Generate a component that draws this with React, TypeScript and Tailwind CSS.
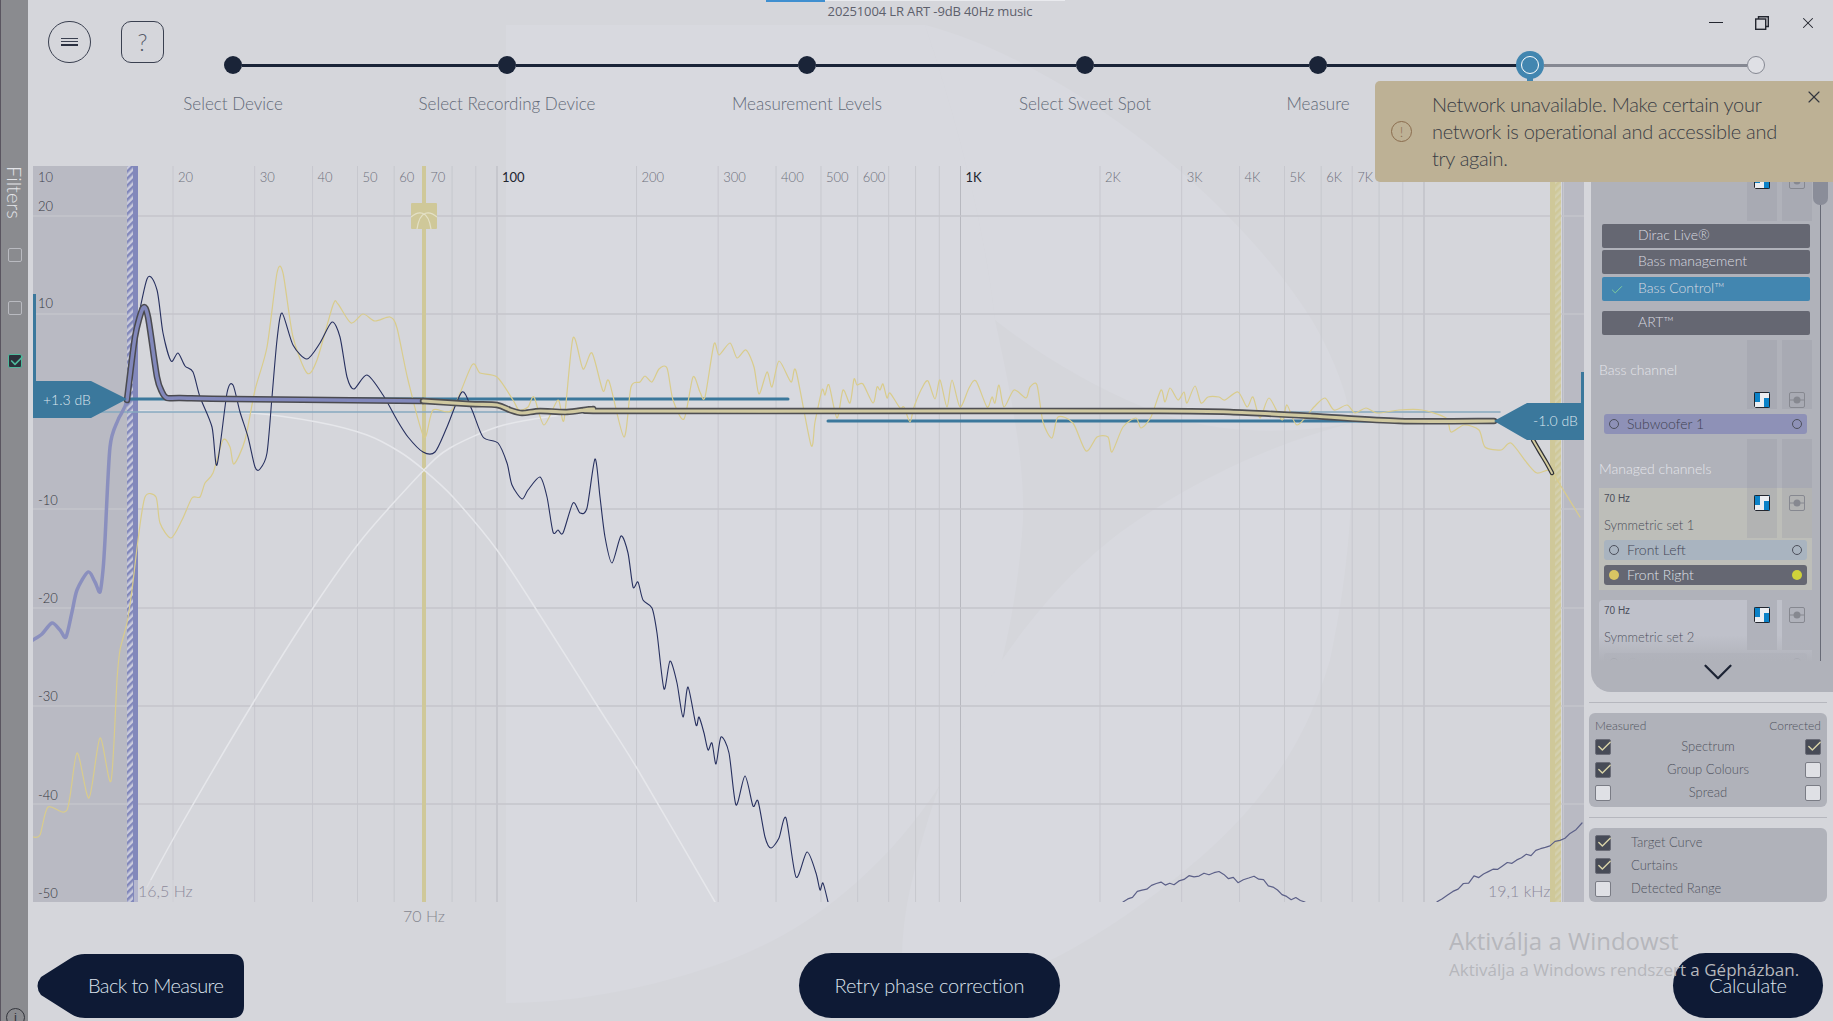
import React from 'react';
import { Check, ChevronDown, X } from 'lucide-react';

type Pt = [number, number];

// frequency -> x position on the chart (page coordinates)
const fx = (f: number) => 497 + 463.5 * Math.log10(f / 100);

const smooth = (p: Pt[]) => {
  const t = 7.5;
  let d = `M${p[0][0]} ${p[0][1]}`;
  for (let i = 0; i < p.length - 1; i++) {
    const a = p[Math.max(i - 1, 0)];
    const b = p[i];
    const c = p[i + 1];
    const e = p[Math.min(i + 2, p.length - 1)];
    d += `C${(b[0] + (c[0] - a[0]) / t).toFixed(1)} ${(b[1] + (c[1] - a[1]) / t).toFixed(1)} ${(c[0] - (e[0] - b[0]) / t).toFixed(1)} ${(c[1] - (e[1] - b[1]) / t).toFixed(1)} ${c[0]} ${c[1]}`;
  }
  return d;
};

// small ripple on the high frequency part of the measured curve
const ripple = (p: Pt[]) => {
  const out: Pt[] = [];
  for (let i = 0; i < p.length - 1; i++) {
    const n = Math.max(Math.round((p[i + 1][0] - p[i][0]) / 5), 1);
    for (let j = 0; j < n; j++) {
      const x = p[i][0] + ((p[i + 1][0] - p[i][0]) * j) / n;
      const y = p[i][1] + ((p[i + 1][1] - p[i][1]) * j) / n;
      out.push([x, y + Math.sin(x * 1.7) * 1.2 + Math.sin(x * 0.6) * 1]);
    }
  }
  out.push(p[p.length - 1]);
  return out.map((q) => `${q[0].toFixed(1)},${q[1].toFixed(1)}`).join(' ');
};

const navy: Pt[] = [
  [132, 350], [147, 279], [157, 290], [163, 333], [171, 361], [178, 353], [185, 366], [193, 372], [200, 397], [212, 427], [217, 465], [227, 393], [233, 385], [240, 412], [248, 437], [255, 467], [260, 469], [267, 453], [272, 397], [277, 340], [282, 313], [293, 345], [307, 359], [320, 343], [332, 322], [340, 337], [347, 377], [354, 389], [367, 375], [383, 395], [397, 420], [408, 437], [423, 452], [435, 452], [447, 427], [462, 392], [472, 410], [483, 437], [498, 443], [507, 463], [512, 485], [522, 499], [528, 490], [540, 477], [547, 497], [553, 532], [558, 530], [563, 533], [573, 503], [580, 513], [587, 508], [595, 459], [600, 497], [605, 537], [612, 563], [621, 536], [628, 553], [633, 587], [638, 582], [643, 600], [652, 608], [657, 633], [664, 689], [670, 661], [677, 683], [683, 717], [688, 687], [696, 725], [699, 717], [704, 733], [708, 750], [712, 743], [716, 764], [721, 737], [729, 753], [736, 805], [745, 776], [753, 806], [758, 801], [765, 837], [771, 848], [779, 838], [786, 818], [796, 877], [807, 852], [816, 873], [820, 890], [823, 883], [828, 902],
];

const yellow: Pt[] = [
  [33, 837], [40, 835], [48, 807], [67, 810], [77, 753], [89, 798], [100, 738], [111, 781], [117, 680], [120, 650], [127, 623], [132, 590], [138, 540], [145, 497], [156, 497], [160, 523], [171, 538], [182, 520], [192, 498], [200, 497], [205, 483], [213, 473], [223, 440], [230, 447], [234, 464], [245, 440], [255, 390], [267, 347], [277, 273], [283, 273], [293, 337], [307, 373], [317, 360], [333, 305], [338, 304], [351, 323], [363, 314], [375, 321], [390, 317], [397, 328], [408, 380], [424, 437], [433, 410], [452, 410], [472, 365], [480, 373], [497, 377], [513, 400], [519, 410], [528, 407], [534, 397], [544, 425], [558, 400], [564, 420], [573, 338], [583, 369], [592, 353], [603, 391], [609, 381], [624, 437], [631, 387], [640, 382], [645, 376], [652, 382], [659, 369], [667, 368], [673, 400], [684, 419], [693, 377], [700, 392], [705, 397], [714, 344], [719, 355], [730, 343], [737, 358], [746, 350], [754, 367], [759, 394], [767, 372], [772, 387], [779, 361], [791, 382], [796, 371], [811, 445], [815, 422], [822, 390], [825, 395], [829, 385], [837, 418], [843, 390], [850, 403], [854, 379], [857, 385], [863, 384], [873, 403], [877, 387], [880, 390], [883, 384], [887, 398], [890, 393], [900, 408], [904, 407], [910, 422], [914, 407], [922, 388], [928, 381], [935, 399], [940, 380], [947, 407], [952, 380], [960, 407], [969, 388], [976, 381], [987, 407], [992, 397], [995, 403], [999, 385], [1004, 407], [1014, 390], [1026, 398], [1030, 387], [1037, 385], [1043, 422], [1052, 438], [1058, 417], [1073, 423], [1086, 451], [1097, 437], [1108, 437], [1112, 452], [1123, 427], [1136, 418], [1141, 428], [1151, 417], [1161, 390], [1165, 402], [1170, 388], [1178, 400], [1184, 392], [1187, 403], [1195, 386], [1201, 403], [1208, 397], [1219, 397], [1225, 400], [1238, 392], [1247, 407], [1253, 397], [1260, 418], [1269, 398], [1282, 420], [1287, 405], [1297, 425], [1314, 407], [1325, 398], [1334, 410], [1347, 405], [1355, 413], [1366, 408], [1377, 413], [1399, 410], [1422, 410], [1446, 418], [1451, 432], [1464, 425], [1479, 430], [1485, 447], [1501, 450], [1511, 443], [1527, 463], [1537, 473], [1550, 470], [1559, 483], [1580, 517],
];

const thickLeft: Pt[] = [[33, 640], [42, 634], [52, 623], [60, 630], [66, 637], [72, 612], [77, 590], [88, 572], [95, 582], [100, 592], [103, 570], [105, 540], [110, 447], [118, 420], [127, 400], [135, 337], [143, 308], [148, 317], [157, 377], [162, 392], [167, 398], [180, 398], [233, 399], [423, 401]];
const thickRight: Pt[] = [[423, 401], [470, 404], [497, 405], [510, 410], [522, 413], [540, 411], [567, 412], [593, 409], [603, 411], [900, 411], [1160, 411], [1230, 412], [1312, 416], [1399, 421], [1494, 421]];
const thickTail: Pt[] = [[1533, 440], [1540, 452], [1546, 462], [1552, 473]];
const lowPass: Pt[] = [[140, 411], [250, 413], [317, 422], [367, 435], [400, 452], [424, 470], [453, 497], [497, 550], [543, 620], [600, 710], [638, 770], [715, 902]];
const highPass: Pt[] = [[147, 887], [180, 827], [253, 703], [313, 608], [363, 538], [424, 470], [450, 448], [497, 427], [547, 417], [600, 412], [700, 411]];
const hiA: Pt[] = [[1123, 902], [1142, 890], [1161, 882], [1174, 885], [1184, 878], [1219, 872], [1238, 882], [1254, 876], [1273, 887], [1282, 895], [1305, 902]];
const hiB: Pt[] = [[1437, 902], [1474, 878], [1512, 862], [1550, 845], [1570, 835], [1582, 823]];

const gridFreqs = [20, 30, 40, 50, 60, 70, 80, 90, 100, 200, 300, 400, 500, 600, 700, 800, 900, 1000, 2000, 3000, 4000, 5000, 6000, 7000, 8000, 9000, 10000, 20000];
const freqLabels: [string, number][] = [['20', 20], ['30', 30], ['40', 40], ['50', 50], ['60', 60], ['70', 70], ['100', 100], ['200', 200], ['300', 300], ['400', 400], ['500', 500], ['600', 600], ['1K', 1000], ['2K', 2000], ['3K', 3000], ['4K', 4000], ['5K', 5000], ['6K', 6000], ['7K', 7000]];
const dbLabels: [string, number][] = [['20', 206], ['10', 303], ['-10', 500], ['-20', 598], ['-30', 696], ['-40', 795], ['-50', 893]];
const dbLines = [216, 314, 509, 608, 706, 804];

const Chart: React.FC = () => (
  <svg viewBox="33 166 1551 736" className="block h-[736px] w-[1551px] shrink-0 overflow-visible">
    <defs>
      <clipPath id="plot"><rect x="33" y="166" width="1551" height="736" /></clipPath>
      <pattern id="hatch" width="5" height="5" patternUnits="userSpaceOnUse" patternTransform="rotate(45)">
        <rect width="5" height="5" fill="#c9cadb" />
        <rect width="2.5" height="5" fill="#8288bb" />
      </pattern>
      <pattern id="hatchGold" width="5" height="5" patternUnits="userSpaceOnUse" patternTransform="rotate(45)">
        <rect width="5" height="5" fill="#d4d0ae" />
        <rect width="2.5" height="5" fill="#cfc899" />
      </pattern>
    </defs>

    <rect x="33" y="166" width="94" height="736" fill="#b9bac3" />
    <rect x="1562" y="166" width="22" height="736" fill="#b9bac3" />

    {gridFreqs.map((f) => (
      <line key={f} x1={fx(f)} x2={fx(f)} y1="166" y2="902" stroke={f === 100 || f === 1000 || f === 10000 ? '#b7b8bf' : '#c7c8ce'} strokeWidth="1" />
    ))}
    {dbLines.map((y) => (
      <line key={y} x1="33" x2="1584" y1={y} y2={y} stroke="#c4c5cb" strokeWidth="1.5" />
    ))}

    <rect x="127" y="166" width="6" height="736" fill="url(#hatch)" />
    <rect x="133" y="166" width="5" height="736" fill="#8288bb" />
    <rect x="1550" y="166" width="5" height="736" fill="#cfc899" />
    <rect x="1555" y="166" width="6" height="736" fill="url(#hatchGold)" />
    <rect x="422" y="166" width="4" height="736" fill="#cfc899" />

    <g clipPath="url(#plot)" fill="none" strokeLinejoin="round" strokeLinecap="round">
      <path d={smooth(lowPass)} stroke="#e6e7eb" strokeWidth="1.5" />
      <path d={smooth(highPass)} stroke="#e6e7eb" strokeWidth="1.5" />
      <line x1="33" x2="520" y1="412" y2="412" stroke="#86a9bf" strokeWidth="1.5" />
      <line x1="1290" x2="1500" y1="412" y2="412" stroke="#86a9bf" strokeWidth="1.5" />
      <line x1="127" x2="788" y1="399" y2="399" stroke="#3b789c" strokeWidth="3" />
      <line x1="828" x2="1500" y1="421" y2="421" stroke="#3b789c" strokeWidth="3" />
      <path d={smooth(yellow)} stroke="#d9cc8c" strokeWidth="1.2" />
      <path d={smooth(navy)} stroke="#27305f" strokeWidth="1.1" />
      <polyline points={ripple(hiA)} stroke="#5c6088" strokeWidth="1.2" />
      <polyline points={ripple(hiB)} stroke="#5c6088" strokeWidth="1.2" />
      <path d={smooth(thickLeft)} stroke="#8a8fbe" strokeWidth="3.5" />
      <path d={smooth(thickLeft.slice(14))} stroke="#4a4a4f" strokeWidth="6.5" />
      <path d={smooth(thickLeft.slice(14))} stroke="#8288bb" strokeWidth="3.5" />
      <path d={smooth(thickRight)} stroke="#4f4f53" strokeWidth="6.5" />
      <path d={smooth(thickRight)} stroke="#cfc8a0" strokeWidth="3.2" />
      <path d={smooth(thickTail)} stroke="#2f3036" strokeWidth="4.5" />
      <path d={smooth(thickTail)} stroke="#d4cca0" strokeWidth="2" />
    </g>

    {/* crossover handle */}
    <rect x="411" y="203" width="26" height="26" rx="1" fill="#cfc899" />
    <path d="M411 217C418 211 428 209 431 229M437 217C430 211 420 209 417 229" fill="none" stroke="#e4e1c7" strokeWidth="1.2" />

    {/* level tabs */}
    <path d="M33 294h3v87h55l36 18-36 19H33Z" fill="#3b789c" />
    <path d="M1584 372v68h-57l-33-19 33-18h54v-31Z" fill="#3b789c" />
    <text x="43" y="405" className="fill-[#dbe6ee] text-[14px]">+1.3 dB</text>
    <text x="1533" y="426" className="fill-[#dbe6ee] text-[14px]">-1.0 dB</text>

    <text x="38" y="182" className="fill-[#3f4250] text-[13px]">10</text>
    {freqLabels.map(([t, f]) => (
      <text key={t} x={fx(f) + 5} y="182" className={f === 100 || f === 1000 ? 'fill-[#22252f] text-[13px] font-normal' : 'fill-[#6d707b] text-[13px]'}>
        {t}
      </text>
    ))}
    {dbLabels.map(([t, y]) => (
      <text key={t} x="38" y={y + 5} className="fill-[#343640] text-[13px]">{t}</text>
    ))}

    <rect x="134" y="880" width="60" height="22" fill="#d5d6db" opacity="0.6" />
    <text x="138" y="897" className="fill-[#8d8a9c] text-[16px]">16,5 Hz</text>
    <text x="1488" y="897" className="fill-[#8d8a9c] text-[16px]">19,1 kHz</text>
    <text x="424" y="922" textAnchor="middle" className="fill-[#85868f] text-[16px]">70 Hz</text>
  </svg>
);

const SplitIcon: React.FC = () => (
  <svg viewBox="0 0 16 16" className="h-4 w-4 shrink-0">
    <rect width="16" height="16" rx="1" fill="#0b82c8" />
    <path d="M0 10H6V1H16V6H10V16H0Z" fill="#eceef2" />
    <rect x="0.5" y="0.5" width="15" height="15" rx="1" fill="none" stroke="#23262e" strokeWidth="1" />
  </svg>
);

const SpeakerIcon: React.FC = () => (
  <svg viewBox="0 0 16 16" className="h-4 w-4 shrink-0">
    <rect x="0.5" y="0.5" width="15" height="15" rx="1.5" fill="none" stroke="#868890" />
    <path d="M1 8h14" stroke="#868890" />
    <circle cx="8" cy="8" r="3.5" fill="#868890" />
  </svg>
);

// the two shaded icon columns on the right of the channel list
const Cells: React.FC<{ height: string; iconTop?: string; tint?: string }> = ({ height, iconTop, tint }) => (
  <div className={`flex shrink-0 gap-[5px] ${height}`}>
    <div className={`flex w-[30px] justify-center ${tint ?? 'bg-[#a8aab3]'}`}>
      {iconTop && <div className={iconTop}><SplitIcon /></div>}
    </div>
    <div className={`flex w-[30px] justify-center ${tint ?? 'bg-[#a8aab3]'}`}>
      {iconTop && <div className={iconTop}><SpeakerIcon /></div>}
    </div>
  </div>
);

const Pill: React.FC<{ label: string; className: string; text: string; left?: string; right?: string }> = ({ label, className, text, left, right }) => (
  <div className={`mx-[5px] flex h-5 items-center rounded-[3px] pl-[5px] pr-[5px] ${className}`}>
    <span className={`h-[10px] w-[10px] rounded-full ${left ?? 'border border-[#4d505c]'}`} />
    <span className={`ml-2 flex-1 text-[14px] leading-5 ${text}`}>{label}</span>
    <span className={`h-[10px] w-[10px] rounded-full ${right ?? 'border border-[#4d505c]'}`} />
  </div>
);

const ModeButton: React.FC<{ label: string; active?: boolean; className?: string }> = ({ label, active, className }) => (
  <div className={`relative flex h-6 items-center rounded-[2px] pb-1 pl-9 text-[14px] text-[#d9dae0] ${active ? 'bg-[#4286b0]' : 'bg-[#656772]'} ${className ?? ''}`}>
    {active && <Check size={14} strokeWidth={1.5} className="absolute left-[8px] top-[6px] text-[#86d39a]" />}
    {label}
  </div>
);

const Box: React.FC<{ on?: boolean }> = ({ on }) => (
  <span className={`relative block h-4 w-4 shrink-0 rounded-[2px] border ${on ? 'border-[#6b6d78] bg-[#474b57]' : 'border-[#7a7c85] bg-[#dfe0e5]'}`}>
    {on && <Check size={17} strokeWidth={2} className="absolute -top-[2px] left-0 text-[#d8d3a8]" />}
  </span>
);

const SetHeader: React.FC<{ name: string; tint: string }> = ({ name, tint }) => (
  <div className="flex justify-between pl-[5px]">
    <div className="text-[#4b4e5a]">
      <div className="pt-[5px] font-[family-name:'Liberation_Sans',sans-serif] text-[10px] leading-3">70 Hz</div>
      <div className="mt-[10px] text-[13px] leading-5">{name}</div>
    </div>
    <Cells height="h-[50px]" iconTop="pt-[7px]" tint={tint} />
  </div>
);

const RightPanel: React.FC = () => (
  <div className="ml-[5px] flex w-[244px] shrink-0 flex-col">
    <div className="relative ml-[2px] flex h-[526px] flex-col overflow-hidden rounded-bl-[20px] bg-[#b0b2ba]">
      <div className="h-[495px] overflow-hidden pl-2 pr-[21px]">
        <div className="flex justify-end"><Cells height="h-[55px]" iconTop="pt-[7px]" /></div>
        <div className="ml-[3px] mr-[2px] mt-[3px] flex flex-col">
          <ModeButton label="Dirac Live®" />
          <ModeButton label="Bass management" className="mt-[2px]" />
          <ModeButton label="Bass Control™" active className="mt-[3px]" />
          <ModeButton label="ART™" className="mt-[10px]" />
        </div>

        <div className="mt-[5px] flex justify-between">
          <span className="pt-5 text-[14px] leading-5 text-[#e4e5ea]">Bass channel</span>
          <Cells height="h-[69px]" iconTop="pt-[52px]" />
        </div>
        <div className="mt-[5px]">
          <Pill label="Subwoofer 1" className="bg-[#8e91b7]" text="text-[#3f4252]" />
        </div>

        <div className="mt-[5px] flex justify-between">
          <span className="pt-5 text-[14px] leading-5 text-[#e4e5ea]">Managed channels</span>
          <Cells height="h-[49px]" />
        </div>
        <div className="h-[102px] bg-[#bdbeb9]">
          <SetHeader name="Symmetric set 1" tint="bg-[#b2b3b3]" />
          <div className="mt-[2px] flex flex-col gap-[5px]">
            <Pill label="Front Left" className="bg-[#a9b4c0]" text="text-[#434656]" />
            <Pill label="Front Right" className="bg-[#656772]" text="text-[#dfe0e6]" left="bg-[#d8c563]" right="bg-[#cfd23a]" />
          </div>
        </div>
        <div className="mt-[10px] rounded-t-[4px] bg-[#bfc1ca] pb-2">
          <SetHeader name="Symmetric set 2" tint="bg-[#b0b2bb]" />
          <div className="mt-[3px]">
            <Pill label="Center" className="bg-[#b3b5bf]" text="text-[#8f929e]" />
          </div>
        </div>
      </div>
      <div className="absolute bottom-[31px] left-0 h-[26px] w-full bg-gradient-to-b from-transparent to-[#b0b2ba]" />
      <div className="relative flex h-[31px] justify-center pl-[12px]">
        <ChevronDown size={50} strokeWidth={1.1} className="-mt-[14px] shrink-0 text-[#1d2435]" />
      </div>
      {/* scrollbar */}
      <div className="absolute right-[12px] top-[39px] h-[456px] w-px bg-[#676a76]" />
      <div className="absolute -top-[10px] right-[5px] h-[49px] w-[15px] rounded-b-[7px] bg-[#8a8d99]" />
    </div>

    <div className="mr-[6px] mt-[10px] h-px bg-[#b6b7be]" />
    <div className="mr-[6px] mt-[10px] h-[94px] rounded-[6px] bg-[#b0b2ba] px-[6px] pt-[7px] text-[#505461]">
      <div className="mb-px flex justify-between text-[12px] leading-3"><span>Measured</span><span>Corrected</span></div>
      {[
        ['Spectrum', true, true],
        ['Group Colours', true, false],
        ['Spread', false, false],
      ].map(([label, a, b]) => (
        <div key={label as string} className="mt-[7px] flex h-4 items-center justify-between text-[13px]">
          <Box on={a as boolean} />
          <span>{label}</span>
          <Box on={b as boolean} />
        </div>
      ))}
    </div>
    <div className="mr-[6px] mt-[10px] h-px bg-[#b6b7be]" />
    <div className="mr-[6px] mt-[10px] h-[74px] rounded-[6px] bg-[#b0b2ba] px-[6px] pt-[7px] text-[#505461]">
      {[
        ['Target Curve', true],
        ['Curtains', true],
        ['Detected Range', false],
      ].map(([label, on], i) => (
        <div key={label as string} className={`flex h-4 items-center gap-5 text-[13px] ${i ? 'mt-[7px]' : ''}`}>
          <Box on={on as boolean} />
          <span>{label}</span>
        </div>
      ))}
    </div>
  </div>
);

const Dot: React.FC = () => <span className="relative z-10 block h-[18px] w-[18px] shrink-0 rounded-full bg-[#1a2438]" />;

const steps = [
  { label: 'Select Device', w: 'w-[274px]' },
  { label: 'Select Recording Device', w: 'w-[300px]' },
  { label: 'Measurement Levels', w: 'w-[278px]' },
  { label: 'Select Sweet Spot', w: 'w-[233px]' },
  { label: 'Measure', w: 'w-[212px]' },
];

const Stepper: React.FC = () => (
  <div className="absolute left-[224px] top-[51px] flex">
    {steps.map((s) => (
      <div key={s.label} className={`${s.w} shrink-0`}>
        <div className="flex h-7 items-center">
          <Dot />
          <span className="h-[3px] flex-1 bg-[#1a2438]" />
        </div>
        <div className="-ml-[141px] mt-[13px] w-[300px] text-center text-[17px] leading-6 text-[#626977]">{s.label}</div>
      </div>
    ))}
    <div className="w-[226px] shrink-0">
      <div className="relative -ml-[5px] flex h-7 items-center">
        <span className="relative z-10 flex h-7 w-7 shrink-0 items-center justify-center rounded-full bg-[#4286b0]">
          <span className="h-[18px] w-[18px] rounded-full border-[1.5px] border-white" />
        </span>
        <span className="h-[3px] flex-1 bg-[#858892]" />
        <span className="absolute left-[11px] top-[24px] h-[6px] w-[6px] bg-[#4286b0]" />
      </div>
    </div>
    <div className="mt-[5px] h-[18px] w-[18px] rounded-full border-[1.5px] border-[#858892] bg-[#dfe0e5]" />
  </div>
);

// faint logo petals behind the whole page
const Backdrop: React.FC = () => (
  <svg viewBox="0 0 1833 1021" className="pointer-events-none absolute inset-0 h-full w-full" fill="#d8d9df">
    <path d="M506 25H925C960 130 985 230 995 320C1010 390 1025 460 1023 520C1020 570 1012 620 1002 660C980 710 958 760 930 800C905 835 878 865 844 893C800 930 750 955 701 970C640 990 570 1003 506 1003Z" />
    <path d="M925 25C1060 60 1230 190 1312 320C1335 360 1348 395 1351 423C1315 430 1280 432 1247 430C1210 428 1175 420 1143 407C1090 385 1040 355 995 320C985 230 960 130 925 25Z" />
    <path d="M1351 423C1355 510 1345 590 1330 660C1318 700 1305 730 1286 760C1260 800 1228 835 1189 867C1150 900 1100 935 1057 957C1010 980 950 995 900 1000C900 980 900 965 902 953C903 925 907 900 913 877C923 830 940 780 959 737C972 710 985 685 1002 660C1040 605 1085 555 1138 520C1200 478 1270 445 1351 423Z" />
  </svg>
);

const App: React.FC = () => (
  <div className="relative flex h-[1021px] w-[1833px] overflow-hidden bg-[#d5d6db] font-[family-name:Lato,sans-serif] font-light">
    <Backdrop />

    <aside className="relative flex w-[28px] shrink-0 flex-col items-center border-l border-[#5a5560] bg-[#8a8b8f] pt-[166px]">
      <span className="text-[20px] leading-6 text-[#e3e4e8] [writing-mode:vertical-rl]">Filters</span>
      <span className="mt-[29px] h-[14px] w-[14px] rounded-[2px] border border-[#b9bac0]" />
      <span className="mt-[39px] h-[14px] w-[14px] rounded-[2px] border border-[#b9bac0]" />
      <span className="relative mt-[39px] h-[14px] w-[14px] rounded-[2px] border border-[#4fb89c] bg-[#2c303a]">
        <Check size={16} strokeWidth={2.5} className="absolute -top-[2px] left-0 text-[#4fb89c]" />
      </span>
      <span className="absolute left-[5px] top-[1008px] flex h-[19px] w-[19px] justify-center rounded-full border border-[#33353c] font-[family-name:'Liberation_Sans',sans-serif] text-[13px] leading-[17px] text-[#33353c]">i</span>
    </aside>

    <main className="relative flex min-w-0 flex-1 flex-col">
      <header className="relative h-[166px] shrink-0">
        <div className="flex gap-[30px] pl-5 pt-[21px]">
          <button className="flex h-[42px] w-[43px] flex-col items-center justify-center gap-[2px] rounded-full border border-[#3a4050]">
            <span className="h-px w-[17px] bg-[#3a4050]" />
            <span className="h-px w-[17px] bg-[#3a4050]" />
            <span className="h-[2px] w-[17px] bg-[#2a3040]" />
          </button>
          <button className="h-[42px] w-[43px] rounded-[10px] border border-[#3a4050] text-[23px] text-[#555a68]">?</button>
        </div>
      </header>

      <div className="relative flex flex-1 pl-[5px]">
        <Chart />
        <RightPanel />
      </div>

      <footer className="relative flex h-[119px] shrink-0 items-start pl-[9px] pt-[52px] text-[20px] tracking-[-0.01em] text-[#dbe3ec]">
        <button className="relative h-[64px] w-[207px] shrink-0 pb-[2px]">
          <svg viewBox="0 0 207 64" className="absolute inset-0 h-full w-full">
            <path d="M48 0H195Q207 0 207 12V52Q207 64 195 64H48Q40 64 34 60L4 41Q-3 32 4 23L34 4Q40 0 48 0Z" fill="#0e1a35" />
          </svg>
          <span className="relative block whitespace-nowrap pl-[51px] text-left tracking-[-0.03em]">Back to Measure</span>
        </button>
        <button className="-mt-px ml-[555px] h-[65px] w-[261px] shrink-0 rounded-[33px] bg-[#0e1a35] pb-[2px]">Retry phase correction</button>
        <button className="-mt-px ml-[613px] h-[65px] w-[150px] shrink-0 rounded-[33px] bg-[#0e1a35] pb-[2px]">Calculate</button>
      </footer>
    </main>

    {/* title bar */}
    <div className="absolute left-[766px] top-0 h-[2px] w-[59px] bg-[#3f8fd0]" />
    <div className="absolute left-[825px] top-0 h-[1px] w-[240px] bg-[#e9eaee]" />
    <div className="absolute left-[730px] top-[2px] w-[400px] text-center font-[family-name:'Open_Sans',sans-serif] text-[13px] font-normal leading-[18px] tracking-[-0.01em] text-[#5d606c]">20251004 LR ART -9dB 40Hz music</div>

    <div className="absolute left-[1709px] top-[16px] flex items-start gap-[32px] text-[#23262f]">
      <span className="mt-[6px] h-px w-[14px] bg-[#23262f]" />
      <svg viewBox="0 0 14 14" className="h-[14px] w-[14px]" fill="none" stroke="#23262f" strokeWidth="1.4">
        <rect x="0.7" y="3" width="10" height="10.3" />
        <path d="M3.5 3V0.7H13.3V10.5H10.7" />
      </svg>
      <X size={18} strokeWidth={1.4} className="-mt-[2px] -ml-[2px]" />
    </div>

    <Stepper />

    {/* notification */}
    <div className="absolute left-[1375px] top-[81px] flex h-[101px] w-[458px] items-center rounded-l-[5px] bg-[#bdb195] pl-[16px] text-[20px] leading-[27px] tracking-[-0.015em] text-[#3a3d45]">
      <span className="flex h-[21px] w-[21px] shrink-0 items-center justify-center rounded-full border-[1.5px] border-[#8a6c4d] text-[14px] leading-none text-[#8a6c4d]">!</span>
      <p className="ml-[20px] w-[360px]">Network unavailable. Make certain your network is operational and accessible and try again.</p>
      <X size={20} strokeWidth={1.4} className="absolute right-[9px] top-[6px] text-[#33363e]" />
    </div>

    {/* windows activation watermark */}
    <div className="pointer-events-none absolute left-[1449px] top-[925px] font-[family-name:'Open_Sans',sans-serif] font-normal text-[#b6b7bc]">
      <div className="text-[24px] leading-[32px]">Aktiválja a Windowst</div>
      <div className="mt-[2px] whitespace-nowrap text-[17px] leading-[22px]">Aktiválja a Windows rendszert a Gépházban.</div>
    </div>
  </div>
);

export default App;
